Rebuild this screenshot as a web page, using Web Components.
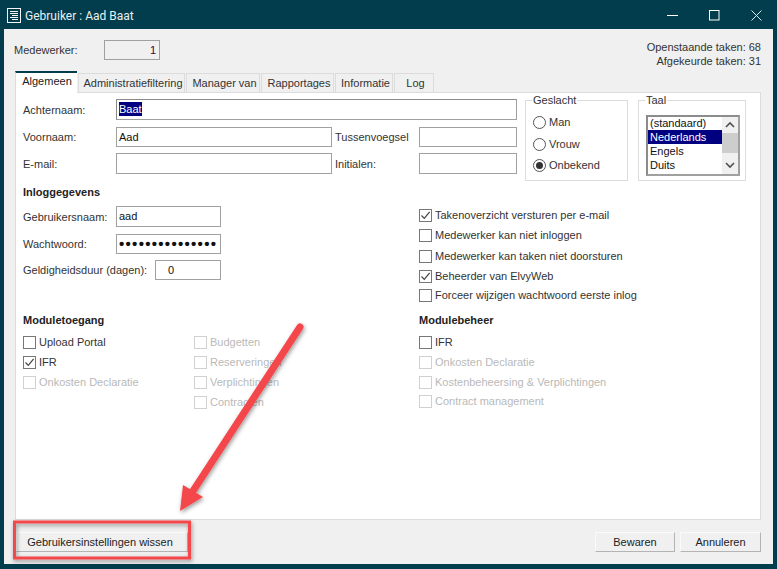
<!DOCTYPE html>
<html>
<head>
<meta charset="utf-8">
<title>Gebruiker : Aad Baat</title>
<style>
html, body { margin: 0; padding: 0; background: #013d4c; }
body { width: 777px; height: 569px; overflow: hidden; position: relative; font: 11px "Liberation Sans", Arial, sans-serif; color: #222; }
</style>
</head>
<body>
<user-dialog></user-dialog>
<callout-overlay></callout-overlay>

<script>
(function() {
	// small helper: every element gets an open shadow root from a string
	function define(name, html, extra) {
		let template = document.createElement("template");
		template.innerHTML = html;
		class El extends HTMLElement {
			constructor() {
				super();
				this._shadowRoot = this.attachShadow({mode: "open"});
				this._shadowRoot.appendChild(template.content.cloneNode(true));
			}
			connectedCallback() {
				if (extra) extra.call(this, this._shadowRoot);
			}
		}
		customElements.define(name, El);
	}

	const CHECK = `<svg width="11" height="11" viewBox="0 0 11 11"><path d="M1.5 5.5 L4.3 8.4 L9.6 1.8" fill="none" stroke="#444" stroke-width="1.2"/></svg>`;

	define("ui-textbox", `
		<style>
		:host { display: block; box-sizing: border-box; align-self: stretch; border: 1px solid #a0a0a0; background: #fff; font-size: 11px; color: #111; padding-left: 2px; line-height: 18px; white-space: nowrap; overflow: hidden; }
		:host([strong]) { border-color: #8a8a8a #a0a0a0 #a0a0a0 #8a8a8a; }
		</style>
		<slot></slot>`);

	define("ui-label", `
		<style>
		:host { display: block; font-size: 11px; line-height: 14px; color: #333; white-space: nowrap; }
		:host([bold]) { font-weight: bold; color: #222; }
		</style>
		<slot></slot>`);

	define("ui-check", `
		<style>
		:host { display: flex; align-items: center; height: 14px; font-size: 11px; color: #333; white-space: nowrap; }
		.box { box-sizing: border-box; width: 13px; height: 13px; border: 1px solid #777; background: #fff; display: flex; align-items: center; justify-content: center; margin-right: 3px; flex: none; }
		.box svg { display: none; }
		:host([checked]) .box svg { display: block; }
		:host([disabled]) { color: #b9b9b9; }
		:host([disabled]) .box { border-color: #d0d0d0; }
		</style>
		<span class="box">${CHECK}</span><slot></slot>`);

	define("ui-radio", `
		<style>
		:host { display: flex; align-items: center; height: 14px; font-size: 11px; color: #333; white-space: nowrap; }
		.dot { box-sizing: border-box; width: 13px; height: 13px; border: 1px solid #555; border-radius: 50%; background: #fff; margin-right: 3px; display: flex; align-items: center; justify-content: center; flex: none; }
		.dot i { display: none; width: 7px; height: 7px; border-radius: 50%; background: #333; }
		:host([checked]) .dot i { display: block; }
		</style>
		<span class="dot"><i></i></span><slot></slot>`);

	define("ui-group", `
		<style>
		:host { display: block; box-sizing: border-box; position: relative; border: 1px solid #dcdcdc; padding: 14px 7px 0; }
		.cap { position: absolute; left: 6px; top: -7px; background: #fff; padding: 0 1px; font-size: 11px; line-height: 13px; color: #333; }
		</style>
		<span class="cap"></span><slot></slot>`,
		function(root) { root.querySelector(".cap").textContent = this.getAttribute("caption"); });

	define("ui-listbox", `
		<style>
		:host { display: flex; box-sizing: border-box; width: 94px; height: 61px; border: 2px solid #8c8c8c; border-right-color: #a0a0a0; border-bottom-color: #a0a0a0; background: #fff; font-size: 11px; color: #111; overflow: hidden; }
		.items { width: 74px; margin-top: -1px; }
		.items div { height: 14px; line-height: 14px; padding-left: 2px; white-space: nowrap; }
		.items .sel { background: #000080; color: #fff; }
		.bar { flex: 1; background: #f0f0f0; display: flex; flex-direction: column; align-items: center; }
		.bar svg { flex: none; }
		.thumb { align-self: stretch; height: 20px; background: #cdcdcd; margin-bottom: 4px; }
		</style>
		<div class="items">
			<div>(standaard)</div>
			<div class="sel">Nederlands</div>
			<div>Engels</div>
			<div>Duits</div>
		</div>
		<div class="bar">
			<svg width="16" height="16" viewBox="0 0 16 16"><path d="M4 10 L8 6 L12 10" fill="none" stroke="#505050" stroke-width="1.6"/></svg>
			<div class="thumb"></div>
			<svg width="16" height="17" viewBox="0 0 16 17"><path d="M4 6 L8 10 L12 6" fill="none" stroke="#505050" stroke-width="1.6"/></svg>
		</div>`);

	define("ui-button", `
		<style>
		:host { display: flex; align-items: center; justify-content: center; box-sizing: border-box; height: 20px; background: #f0f0f0; border: 1px solid; border-color: #fafafa #b4b4b4 #b4b4b4 #fafafa; font-size: 11px; color: #222; white-space: nowrap; }
		</style>
		<slot></slot>`);

	define("title-bar", `
		<style>
		:host { display: flex; align-items: center; box-sizing: border-box; height: 29px; padding-top: 2px; color: #e8f0f2; font: 12px Roboto, "Open Sans", sans-serif; }
		.icon { margin: 0 4px 0 7px; display: block; }
		.title { flex: 1; }
		.ctl { width: 42px; height: 27px; display: flex; align-items: center; justify-content: center; }
		</style>
		<svg class="icon" width="14" height="15" viewBox="0 0 14 15">
			<rect x="0.5" y="0.5" width="13" height="14" fill="none" stroke="#f2f6f7"/>
			<path d="M3 3.5h8M3 5.5h8M5 7.5h6M3 9.5h8M5 11.5h6" stroke="#f2f6f7" fill="none"/>
		</svg>
		<span class="title"><slot></slot></span>
		<span class="ctl"><svg width="11" height="11" viewBox="0 0 11 11"><path d="M0 5.5h11" stroke="#fff"/></svg></span>
		<span class="ctl"><svg width="11" height="11" viewBox="0 0 11 11"><rect x="0.5" y="0.5" width="9.5" height="9.5" fill="none" stroke="#fff"/></svg></span>
		<span class="ctl"><svg width="11" height="11" viewBox="0 0 11 11"><path d="M0.5 0.5 L10.5 10.5 M10.5 0.5 L0.5 10.5" fill="none" stroke="#dfe8ea" stroke-width="1"/></svg></span>`);

	define("tab-strip", `
		<style>
		:host { display: flex; align-items: flex-end; gap: 1px; height: 21px; position: relative; z-index: 1; font-size: 11px; color: #333; }
		span { box-sizing: border-box; height: 19px; line-height: 18px; padding-left: 3px; text-align: center; border: 1px solid #dcdcdc; border-bottom: 0; white-space: nowrap; background: #f0f0f0; }
		.on { height: 22px; margin-bottom: -1px; padding-left: 1px; background: #fff; border-top: 2px solid #013d4c; border-left-color: #dcdcdc; border-right: 0; line-height: 17px; padding-bottom: 3px; color: #222; }
		</style>
		<span class="on" style="width:62px">Algemeen</span>
		<span style="width:107px">Administratiefiltering</span>
		<span style="width:74px">Manager van</span>
		<span style="width:73px">Rapportages</span>
		<span style="width:58px">Informatie</span>
		<span style="width:40px">Log</span>`);

	define("general-page", `
		<style>
		:host { display: block; box-sizing: border-box; flex: 1; background: #fff; border: 1px solid #dcdcdc; padding: 6px 0 0 7px; }
		.top { display: flex; height: 82px; }
		.names { width: 494px; height: 75px; display: grid; grid-template-columns: 93px 216px 87px 98px; grid-template-rows: 21px 20px 21px; row-gap: 6.5px; align-items: center; align-content: start; }
		.names .wide { grid-column: 2 / 5; }
		.names ui-label.mid { padding-left: 3px; }
		.sel { background: #000080; color: #fff; padding: 1px 0; }
		.gender { width: 103px; height: 81px; margin: 1px 0 0 8px; display: grid; grid-template-rows: 22px 21px 14px; align-content: start; }
		.lang { width: 108px; height: 81px; margin: 1px 0 0 10px; }
		.heading { margin-top: 4px; }
		.login { display: grid; grid-template-columns: 396px 1fr; margin-top: 7px; height: 96px; }
		.login-left { display: grid; grid-template-columns: 93px 105px; grid-template-rows: 21px 20px 20px; row-gap: 6.5px; align-items: center; align-content: start; }
		.login-left .short { grid-column: 1 / 3; display: flex; align-items: center; justify-content: space-between; }
		.login-left .short ui-textbox { width: 66px; height: 20px; padding-left: 12px; }
		.dots { font-weight: bold; font-size: 15px; letter-spacing: 1.3px; line-height: 18px; }
		.login-right { display: grid; grid-template-rows: 20px 21px 20px 19px 14px; padding-top: 2px; }
		.modules { display: grid; grid-template-columns: 171px 225px 1fr; margin-top: 11px; }
		.head-row { grid-column: 1 / 3; }
		.stack { display: grid; grid-auto-rows: 14px; row-gap: 6px; margin-top: 8px; align-content: start; }
		.stack.tight ui-check:last-child { margin-top: -1px; }
		</style>
		<div class="top">
			<div class="names">
				<ui-label>Achternaam:</ui-label>
				<ui-textbox class="wide" strong><span class="sel">Baat</span></ui-textbox>
				<ui-label>Voornaam:</ui-label>
				<ui-textbox>Aad</ui-textbox>
				<ui-label class="mid">Tussenvoegsel</ui-label>
				<ui-textbox></ui-textbox>
				<ui-label>E-mail:</ui-label>
				<ui-textbox></ui-textbox>
				<ui-label class="mid">Initialen:</ui-label>
				<ui-textbox></ui-textbox>
			</div>
			<ui-group class="gender" caption="Geslacht">
				<ui-radio>Man</ui-radio>
				<ui-radio>Vrouw</ui-radio>
				<ui-radio checked>Onbekend</ui-radio>
			</ui-group>
			<ui-group class="lang" caption="Taal"><ui-listbox></ui-listbox></ui-group>
		</div>
		<ui-label bold class="heading">Inloggegevens</ui-label>
		<div class="login">
			<div class="login-left">
				<ui-label>Gebruikersnaam:</ui-label>
				<ui-textbox>aad</ui-textbox>
				<ui-label>Wachtwoord:</ui-label>
				<ui-textbox><span class="dots">•••••••••••••••</span></ui-textbox>
				<div class="short">
					<ui-label>Geldigheidsduur (dagen):</ui-label>
					<ui-textbox>0</ui-textbox>
				</div>
			</div>
			<div class="login-right">
				<ui-check checked>Takenoverzicht versturen per e-mail</ui-check>
				<ui-check>Medewerker kan niet inloggen</ui-check>
				<ui-check>Medewerker kan taken niet doorsturen</ui-check>
				<ui-check checked>Beheerder van ElvyWeb</ui-check>
				<ui-check>Forceer wijzigen wachtwoord eerste inlog</ui-check>
			</div>
		</div>
		<div class="modules">
			<ui-label bold class="head-row">Moduletoegang</ui-label>
			<ui-label bold>Modulebeheer</ui-label>
			<div class="stack">
				<ui-check>Upload Portal</ui-check>
				<ui-check checked>IFR</ui-check>
				<ui-check disabled>Onkosten Declaratie</ui-check>
			</div>
			<div class="stack">
				<ui-check disabled>Budgetten</ui-check>
				<ui-check disabled>Reserveringen</ui-check>
				<ui-check disabled>Verplichtingen</ui-check>
				<ui-check disabled>Contracten</ui-check>
			</div>
			<div class="stack tight">
				<ui-check>IFR</ui-check>
				<ui-check disabled>Onkosten Declaratie</ui-check>
				<ui-check disabled>Kostenbeheersing &amp; Verplichtingen</ui-check>
				<ui-check disabled>Contract management</ui-check>
			</div>
		</div>`);

	define("user-dialog", `
		<style>
		:host { display: block; width: 777px; height: 569px; }
		.client { box-sizing: border-box; margin: 0 4px 0 4px; height: 535px; background: #f0f0f0; padding: 0 12px 0 11px; display: flex; flex-direction: column; }
		.head { display: flex; height: 42px; justify-content: space-between; padding-top: 11px; box-sizing: border-box; }
		.who { display: flex; align-items: center; height: 20px; }
		.who ui-label { width: 90px; margin-left: -1px; }
		.who .num { box-sizing: border-box; width: 56px; height: 20px; border: 1px solid #a0a0a0; text-align: right; padding-right: 3px; line-height: 18px; font-size: 11px; color: #400040; }
		.tasks { text-align: right; font-size: 11px; line-height: 14px; color: #333; }
		.foot { display: flex; height: 44px; padding-top: 12px; box-sizing: border-box; align-items: flex-start; }
		.foot .clear { width: 172px; margin-left: 1px; padding-right: 4px; }
		.foot .save { width: 80px; margin-left: auto; }
		.foot .cancel { width: 81px; margin-left: 5px; }
		</style>
		<title-bar>Gebruiker : Aad Baat</title-bar>
		<div class="client">
			<div class="head">
				<div class="who"><ui-label>Medewerker:</ui-label><div class="num">1</div></div>
				<div class="tasks">Openstaande taken: 68<br>Afgekeurde taken: 31</div>
			</div>
			<tab-strip></tab-strip>
			<general-page></general-page>
			<div class="foot">
				<ui-button class="clear">Gebruikersinstellingen wissen</ui-button>
				<ui-button class="save">Bewaren</ui-button>
				<ui-button class="cancel">Annuleren</ui-button>
			</div>
		</div>`);

	// red arrow and box pasted over the screenshot
	define("callout-overlay", `
		<style>
		:host { display: block; position: absolute; left: 0; top: 0; width: 777px; height: 569px; pointer-events: none; }
		svg { display: block; }
		</style>
		<svg width="777" height="569" viewBox="0 0 777 569">
			<defs>
				<filter id="soft" x="-20%" y="-20%" width="140%" height="140%">
					<feDropShadow dx="1" dy="2" stdDeviation="2" flood-color="#000" flood-opacity="0.4"/>
				</filter>
			</defs>
			<g filter="url(#soft)">
				<rect x="14.5" y="522" width="175" height="36" fill="none" stroke="#f4474b" stroke-width="3"/>
				<path d="M300 327 L193 491" fill="none" stroke="#f4474b" stroke-width="7" stroke-linecap="round"/>
				<path d="M180 511 L183 485 L203 497 Z" fill="#f4474b"/>
			</g>
		</svg>`);
})();
</script>
</body>
</html>
